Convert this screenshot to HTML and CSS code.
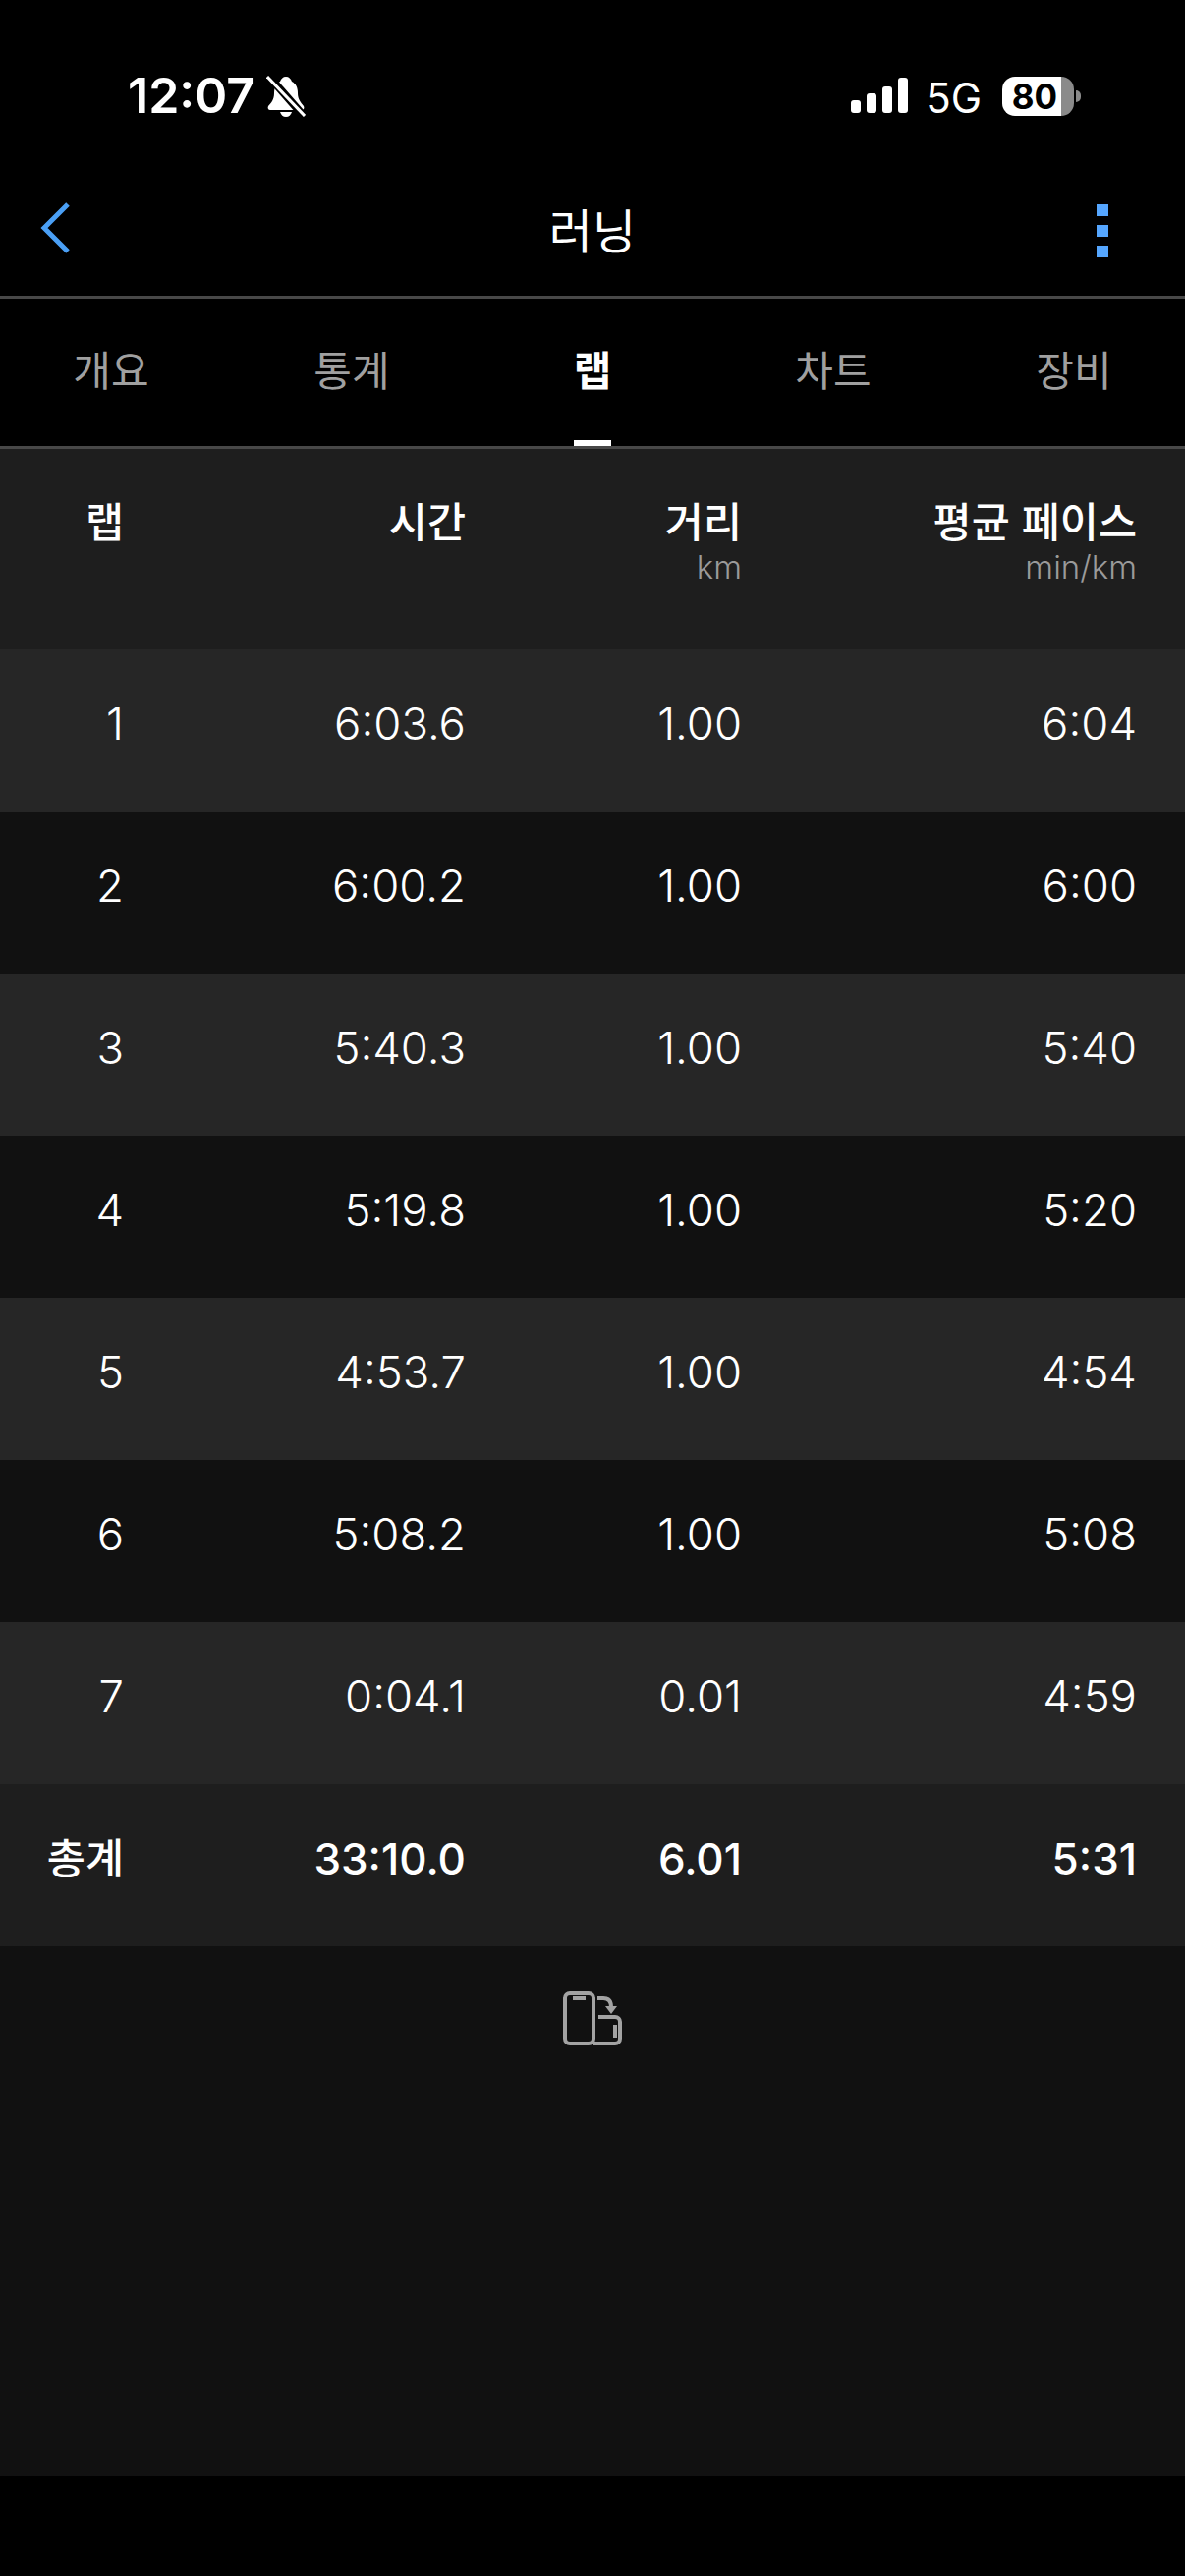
FILE: index.html
```html
<!DOCTYPE html>
<html lang="ko">

<head>
    <meta charset="utf-8">
    <title>러닝</title>
    <link rel="stylesheet" href="styles.css">
</head>

<body>
    <div class="status">
        <div class="status-left">
            <span class="time">12:07</span>
            <svg class="bell" viewBox="0 0 40 42" width="40" height="42">
                <path d="M20 1c3 0 5 2 6 5 4 2 6 6 6 12 0 6 3 9 6 13 1 2 0 4-2 4H4c-2 0-3-2-2-4 3-3 6-7 6-13 0-6 2-10 6-12 1-3 3-5 6-5z" fill="#fff"/>
                <path d="M14 37c1 3 3 5 6 5s5-2 6-5z" fill="#fff"/>
                <path d="M2 0l36 41" stroke="#000" stroke-width="8"/>
                <path d="M1 1l38 40" stroke="#fff" stroke-width="3"/>
            </svg>
        </div>
        <div class="status-right">
            <svg class="signal" viewBox="0 0 58 37" width="58" height="37">
                <rect x="0" y="23" width="10" height="13" rx="3" fill="#fff"/>
                <rect x="16" y="16" width="10" height="20" rx="3" fill="#fff"/>
                <rect x="32" y="9" width="10" height="27" rx="3" fill="#fff"/>
                <rect x="48" y="0" width="10" height="36" rx="3" fill="#fff"/>
            </svg>
            <span class="network">5G</span>
            <div class="battery"><span>80</span></div>
            <div class="battery-nub"></div>
        </div>
    </div>

    <div class="nav">
        <svg class="back" viewBox="0 0 30 52" width="30" height="52">
            <path d="M28 2L4 26l24 24" fill="none" stroke="#4a9ff5" stroke-width="5"/>
        </svg>
        <div class="nav-title">러닝</div>
        <div class="more"><i></i><i></i><i></i></div>
    </div>

    <div class="tabs">
        <div class="tab"><span>개요</span></div>
        <div class="tab"><span>통계</span></div>
        <div class="tab active"><span>랩</span></div>
        <div class="tab"><span>차트</span></div>
        <div class="tab"><span>장비</span></div>
    </div>

    <div class="content">
        <div class="row head">
            <div>랩</div>
            <div>시간</div>
            <div>거리<small>km</small></div>
            <div>평균 페이스<small>min/km</small></div>
        </div>
        <div class="row odd"><div>1</div><div>6:03.6</div><div>1.00</div><div>6:04</div></div>
        <div class="row"><div>2</div><div>6:00.2</div><div>1.00</div><div>6:00</div></div>
        <div class="row odd"><div>3</div><div>5:40.3</div><div>1.00</div><div>5:40</div></div>
        <div class="row"><div>4</div><div>5:19.8</div><div>1.00</div><div>5:20</div></div>
        <div class="row odd"><div>5</div><div>4:53.7</div><div>1.00</div><div>4:54</div></div>
        <div class="row"><div>6</div><div>5:08.2</div><div>1.00</div><div>5:08</div></div>
        <div class="row odd"><div>7</div><div>0:04.1</div><div>0.01</div><div>4:59</div></div>
        <div class="row total"><div>총계</div><div>33:10.0</div><div>6.01</div><div>5:31</div></div>

        <div class="rotate">
            <svg viewBox="0 0 60 55" width="60" height="55">
                <g fill="none" stroke="#a3a3a3" stroke-width="4">
                    <rect x="2" y="2" width="29" height="51" rx="5"/>
                    <path d="M31 53h22a5 5 0 0 0 5-5V31a5 5 0 0 0-5-5H36"/>
                    <path d="M10 7h13"/>
                    <path d="M53 34v13"/>
                    <path d="M35 7h6c5 0 8 3 8 9"/>
                </g>
                <path d="M43 15h12l-6 8z" fill="#a3a3a3"/>
            </svg>
        </div>
    </div>
</body>

</html>
```

FILE: styles.css
```css
body {
    margin: 0;
    padding: 0;
    width: 1206px;
    height: 2622px;
    background-color: #000;
    color: #fff;
    font-family: Inter, "Noto Sans CJK KR", sans-serif;
    overflow: hidden;
}

.status {
    height: 165px;
    box-sizing: border-box;
    padding: 77px 106px 0 130px;
    display: flex;
    justify-content: space-between;
    align-items: flex-start;
}

.status-left {
    display: flex;
    align-items: center;
    height: 41px;
}

.time {
    font-size: 50px;
    font-weight: 600;
    line-height: 41px;
}

.bell {
    margin-left: 12px;
}

.status-right {
    display: flex;
    align-items: center;
    height: 41px;
}

.network {
    font-size: 42px;
    line-height: 41px;
    margin-left: 18px;
    margin-top: 3px;
}

.battery {
    margin-left: 21px;
    width: 73px;
    height: 40px;
    border-radius: 13px;
    background: linear-gradient(to right, #fff 60px, #8a8a8a 60px);
    color: #000;
    font-size: 35px;
    font-weight: 700;
    line-height: 40px;
    text-align: center;
    padding-right: 7px;
    box-sizing: border-box;
}

.battery-nub {
    width: 5px;
    height: 12px;
    margin-left: 2px;
    background: #8a8a8a;
    border-radius: 0 6px 6px 0;
}

.nav {
    height: 139px;
    box-sizing: border-box;
    border-bottom: 3px solid #484848;
    padding: 0 41px 2px;
    display: grid;
    grid-template-columns: 1fr auto 1fr;
    align-items: center;
}

.nav-title {
    font-family: "Noto Sans CJK KR", sans-serif;
    font-size: 48px;
    font-weight: 400;
    line-height: 60px;
}

.more {
    display: flex;
    flex-direction: column;
    align-items: flex-end;
    gap: 9px;
    margin: 6px 37px 0 0;
}

.more i {
    display: block;
    width: 12px;
    height: 12px;
    background: #55a6ff;
}

.tabs {
    height: 153px;
    box-sizing: border-box;
    border-bottom: 3px solid #484848;
    padding: 0 74px;
    display: flex;
    justify-content: space-between;
    font-family: "Noto Sans CJK KR", sans-serif;
    font-size: 42px;
    color: #a0a0a0;
}

.tab {
    display: flex;
    justify-content: center;
    width: 78px;
}

.tab span {
    box-sizing: border-box;
    height: 150px;
    padding-top: 41px;
    line-height: 60px;
    border-bottom: 6px solid transparent;
}

.tab.active {
    color: #fff;
    font-weight: 700;
}

.tab.active span {
    border-bottom-color: #fff;
}

.content {
    height: 2063px;
    background-color: #111;
}

.row {
    display: grid;
    grid-template-columns: 126px 348px 281px 402px;
    height: 165px;
    box-sizing: border-box;
    padding-bottom: 14px;
    align-items: center;
    text-align: right;
    font-size: 45.5px;
    font-weight: 350;
    line-height: 56px;
}

.row.odd {
    background-color: #262626;
}

.row.head {
    height: 204px;
    padding: 44px 0 0;
    align-items: start;
    background-color: #1e1e1e;
    font-family: "Noto Sans CJK KR", sans-serif;
    font-size: 42.5px;
    font-weight: 500;
}

.row.head small {
    display: block;
    font-family: Inter, sans-serif;
    font-size: 33px;
    font-weight: 300;
    line-height: 40px;
    color: #9a9a9a;
}

.row.total {
    background-color: #1e1e1e;
    font-size: 44px;
    font-weight: 500;
}

.row.total div:first-child {
    font-family: "Noto Sans CJK KR", sans-serif;
    font-size: 42.5px;
    font-weight: 500;
    margin-top: -6px;
}

.rotate {
    display: flex;
    justify-content: center;
    padding-top: 46px;
}
```
